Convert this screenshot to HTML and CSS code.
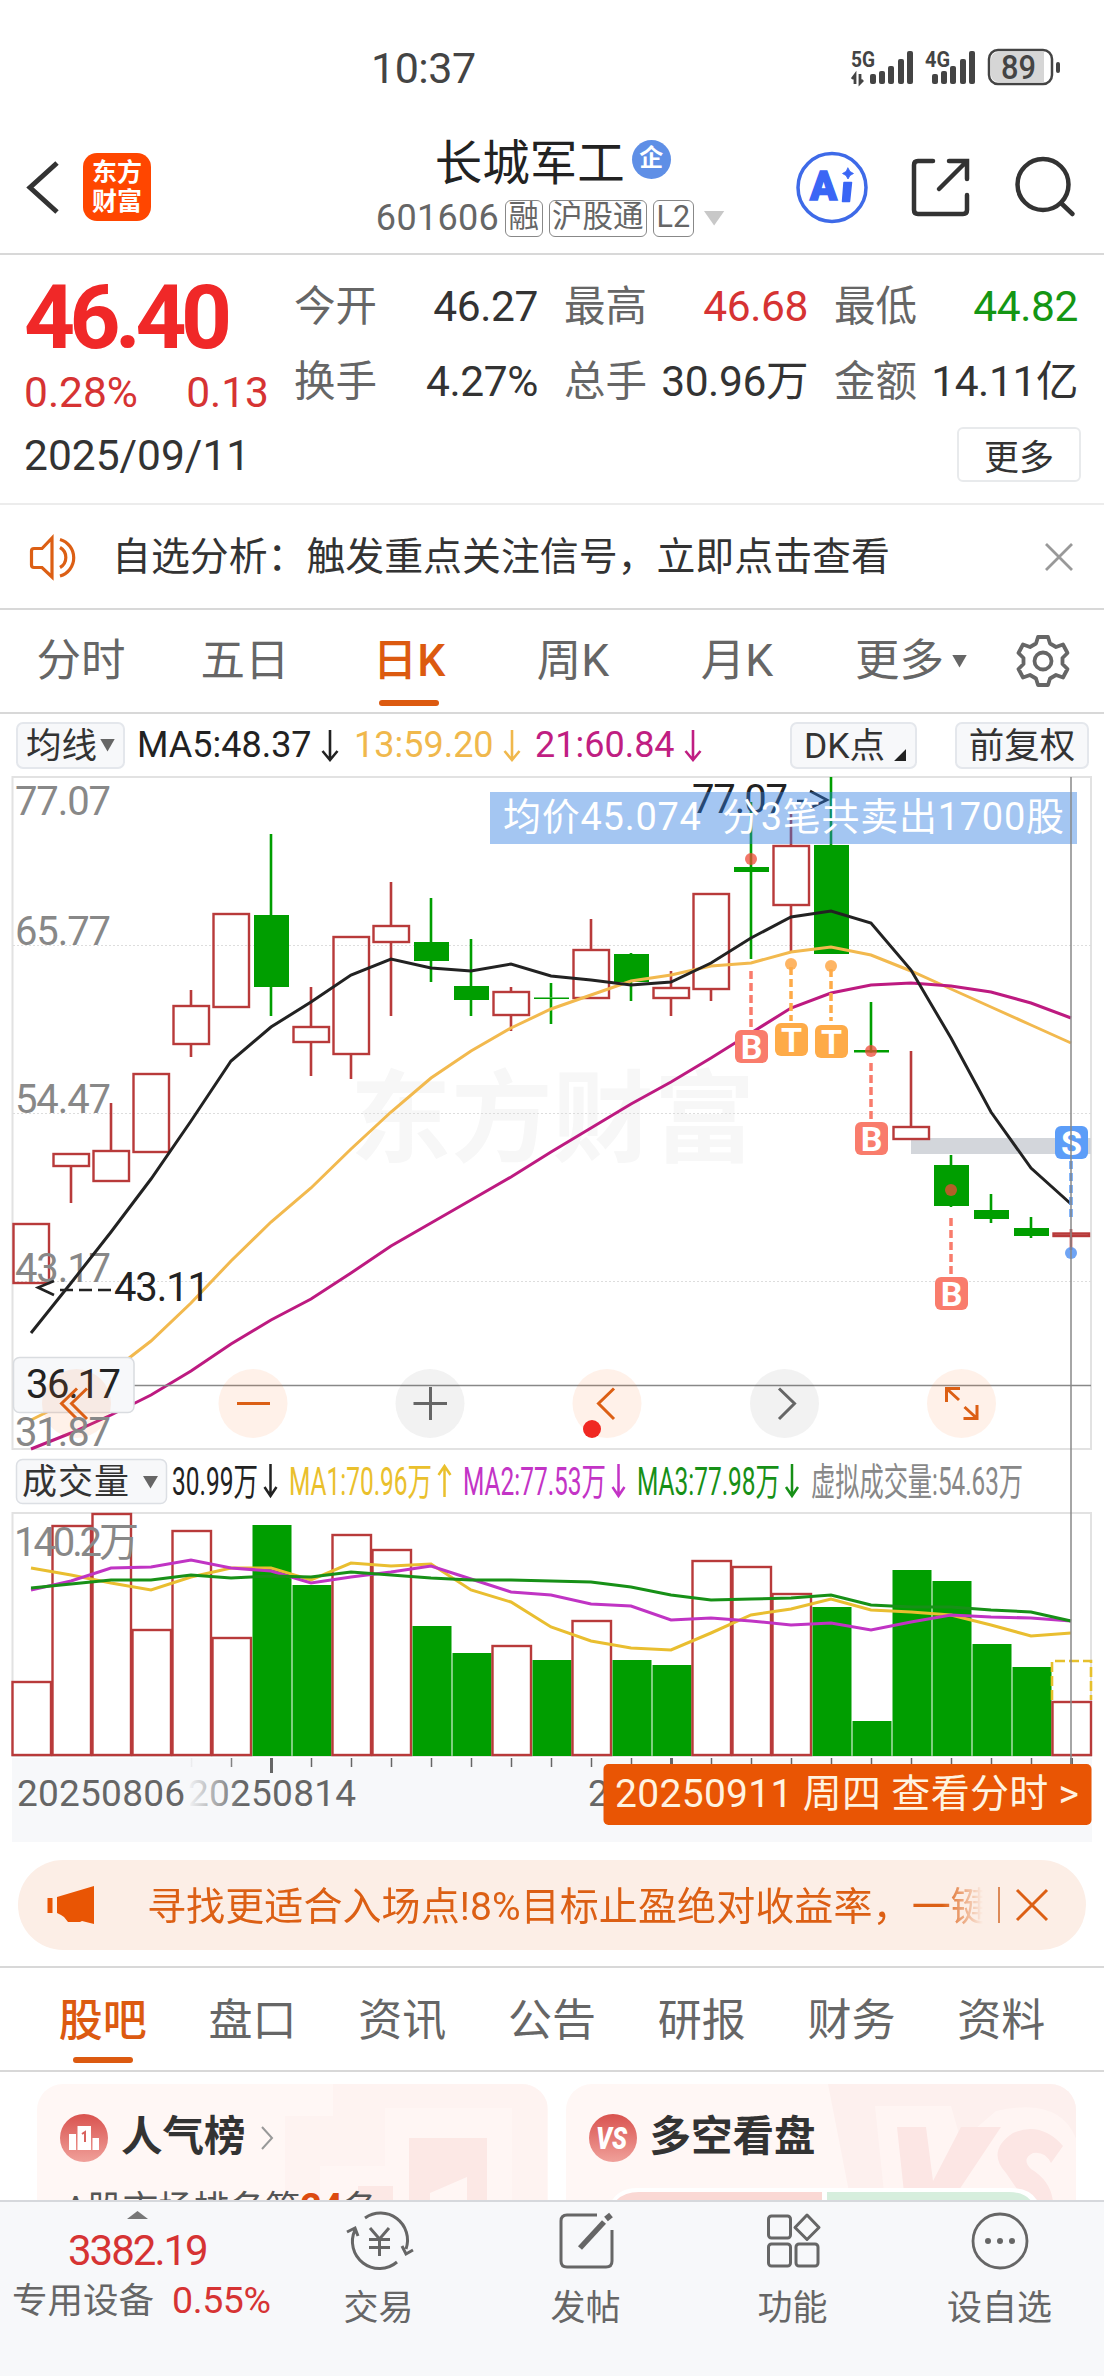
FILE: index.html
```html
<!DOCTYPE html>
<html lang="zh-CN">
<head>
    <meta charset="UTF-8">
    <meta name="viewport" content="width=device-width, initial-scale=1.0">
    <title>长城军工 601606</title>
    <link rel="stylesheet" href="styles.css">
</head>
<body>
    <div class="statusbar">
        <span class="clock">10:37</span>
        <svg class="signals" width="212" height="40" viewBox="850 48 212 40">
            <g fill="#444">
                <text x="851" y="67" font-size="22" font-weight="700" textLength="24" lengthAdjust="spacingAndGlyphs">5G</text>
                <text x="925" y="67" font-size="22" font-weight="700" textLength="25" lengthAdjust="spacingAndGlyphs">4G</text>
                <path d="M855 84V75l-3 4M860 74v9l3-3" stroke="#444" stroke-width="2.8" fill="none"/>
                <rect x="870" y="74" width="6" height="10" rx="2"/><rect x="879" y="71" width="6" height="13" rx="2"/>
                <rect x="888" y="66" width="6" height="18" rx="2"/><rect x="898" y="59" width="6" height="25" rx="2"/>
                <rect x="907" y="51" width="6" height="33" rx="2"/>
                <rect x="932" y="74" width="6" height="10" rx="2"/><rect x="941" y="71" width="6" height="13" rx="2"/>
                <rect x="950" y="66" width="6" height="18" rx="2"/><rect x="960" y="59" width="6" height="25" rx="2"/>
                <rect x="969" y="51" width="6" height="33" rx="2"/>
            </g>
            <rect x="989" y="50" width="63" height="34" rx="9" fill="#fff" stroke="#444" stroke-width="2.5"/>
            <path d="M998 52h46v30h-46a7 7 0 0 1-7-7V59a7 7 0 0 1 7-7z" fill="#d6d6d6"/>
            <rect x="1056" y="62" width="4" height="11" rx="2" fill="#444"/>
            <text x="1001" y="79" font-size="33" font-weight="500" fill="#444" textLength="35" lengthAdjust="spacingAndGlyphs">89</text>
        </svg>
    </div>

    <header class="header">
        <svg class="back" width="36" height="60" viewBox="25 157 36 60"><path d="M57 163L30 187.500L57 212" fill="none" stroke="#333" stroke-width="5"/></svg>
        <div class="logo"><span>东方</span><span>财富</span></div>
        <div class="title">
            <div class="title-name">长城军工<span class="corp">企</span></div>
            <div class="title-code"><span>601606</span><i>融</i><i>沪股通</i><i>L2</i><b class="tri"></b></div>
        </div>
        <svg class="actions" width="290" height="76" viewBox="794 150 290 76" fill="none" stroke="#333" stroke-width="4.500" stroke-linecap="round">
            <circle cx="832" cy="187.500" r="34" stroke="#3e6ae8" stroke-width="3.500"/>
            <text x="810" y="200" font-size="41" font-weight="900" fill="#3a66f5" stroke="#3a66f5" stroke-width="1.500" textLength="27" lengthAdjust="spacingAndGlyphs">A</text>
            <path d="M844 182.500H851.500L849.500 201.500H842.500z" fill="#3a66f5" stroke="#3a66f5" stroke-width="1.500" stroke-linejoin="round"/>
            <path d="M848 168l2 3.500 3.500 2-3.500 2-2 3.500-2-3.500-3.500-2 3.500-2z" fill="#3a66f5" stroke="#3a66f5" stroke-width=".8"/>
            <path d="M933 161h-15q-4 0-4 4v45q0 4 4 4h45q4 0 4-4v-15M949 161h18v18M966 162l-27 27"/>
            <circle cx="1043" cy="184.500" r="25.500"/><path d="M1061 203l11.500 11"/>
        </svg>
    </header>

    <section class="quote">
        <div class="price">
            <div class="price-now">46.40</div>
            <div class="price-change"><span>0.28%</span><span>0.13</span></div>
        </div>
        <div class="stats">
            <div><label>今开</label><span>46.27</span></div>
            <div><label>最高</label><span class="up">46.68</span></div>
            <div><label>最低</label><span class="down">44.82</span></div>
            <div><label>换手</label><span>4.27%</span></div>
            <div><label>总手</label><span>30.96万</span></div>
            <div><label>金额</label><span>14.11亿</span></div>
        </div>
        <div class="date">2025/09/11</div>
        <button class="more">更多</button>
    </section>

    <section class="notice">
        <svg width="54" height="48" viewBox="28 532 54 48" fill="none" stroke="#dc5f14" stroke-width="3.200">
            <path d="M52 537L42 547.500H34q-2.500 0-2.500 2.500v14q0 2.500 2.500 2.500h8L52 576z"/>
            <path d="M60 546.500a11.500 11.500 0 0 1 0 20M60 538.500a19 19 0 0 1 0 36.500"/>
        </svg>
        <p>自选分析：触发重点关注信号，立即点击查看</p>
        <svg width="32" height="32" viewBox="0 0 32 32" stroke="#999" stroke-width="2.800"><path d="M3 3L29 29M29 3L3 29"/></svg>
    </section>

    <nav class="tabs">
        <a>分时</a><a>五日</a><a class="active">日K</a><a>周K</a><a>月K</a><a class="tab-more">更多<b class="tri"></b></a>
        <svg class="gear" width="54" height="54" viewBox="-27 -27 54 54" fill="none" stroke="#666" stroke-width="3.800" stroke-linejoin="round">
            <path d="M-5 -24H5L7 -17.500L13 -14L20 -16.500L24.500 -8L19.500 -3V3L24.500 8L20 16.500L13 14L7 17.500L5 24H-5L-7 17.500L-13 14L-20 16.500L-24.500 8L-19.500 3V-3L-24.500 -8L-20 -16.500L-13 -14L-7 -17.500z"/>
            <circle r="8.500"/>
        </svg>
    </nav>

    <div class="ma-row">
        <button class="chip chip-ma"><span>均线</span><b class="tri"></b></button>
        <span class="ma5">MA5:48.37<svg class="arrow" width="18" height="32" viewBox="0 0 18 32"><path d="M9 0V29M1.500 21L9 30L16.500 21"/></svg></span>
        <span class="ma13">13:59.20<svg class="arrow" width="18" height="32" viewBox="0 0 18 32"><path d="M9 0V29M1.500 21L9 30L16.500 21"/></svg></span>
        <span class="ma21">21:60.84<svg class="arrow" width="18" height="32" viewBox="0 0 18 32"><path d="M9 0V29M1.500 21L9 30L16.500 21"/></svg></span>
        <button class="chip chip-dk"><span>DK点</span><b></b></button>
        <button class="chip chip-fq"><span>前复权</span></button>
    </div>

    <svg class="chart" width="1104" height="1072" viewBox="0 774 1104 1072">
        <text class="watermark" x="350" y="1154" textLength="405" lengthAdjust="spacingAndGlyphs">东方财富</text>
        <!-- price panel -->
        <rect x="12.500" y="777" width="1078.500" height="672" fill="none" stroke="#e2e2e2" stroke-width="2"/>
        <path d="M13 945.500H1091M13 1113.500H1091M13 1281.500H1091" stroke="#ddd" stroke-width="1.200" stroke-dasharray="2 2"/>
        <rect x="911" y="1138" width="180" height="16" fill="#d3d6db"/>
        <g id="candles"></g>
        <g class="axis-label">
            <text x="15" y="815" textLength="96">77.07</text>
            <text x="15" y="945" textLength="96">65.77</text>
            <text x="15" y="1113" textLength="96">54.47</text>
            <text x="15" y="1282" textLength="96">43.17</text>
        </g>
        <g id="ma-lines" fill="none" stroke-width="3"></g>
        <text class="mark" x="692" y="813" textLength="96">77.07</text>
        <path d="M797 801H806M810 791L827 800L810 808" class="mark-arrow"/>
        <text class="mark" x="114" y="1301" textLength="96">43.11</text>
        <path d="M54 1281L38 1287.500L54 1295M60 1290H73M79 1290H92M98 1290H111" class="mark-arrow"/>
        <g id="trades"></g>

        <path d="M13 1385.500H1091" stroke="#888" stroke-width="1.600"/>
        <rect x="13.500" y="1357.500" width="120.500" height="55" rx="6" fill="#f7f8fa" stroke="#d9dce0" stroke-width="1.500"/>
        <text class="mark" x="26" y="1398" textLength="95">36.17</text>
        <g fill="#ff8038" fill-opacity=".11">
            <circle cx="76.500" cy="1403.500" r="34.500"/><circle cx="253" cy="1403.500" r="34.500"/>
            <circle cx="430" cy="1403.500" r="34.500" fill="#444" fill-opacity=".07"/><circle cx="607" cy="1403.500" r="34.500"/>
            <circle cx="784.500" cy="1403.500" r="34.500" fill="#444" fill-opacity=".07"/><circle cx="961.500" cy="1403.500" r="34.500"/>
        </g>
        <g fill="none" stroke="#dc5f14" stroke-width="3">
            <path d="M77 1388.500L61.500 1403.500L77 1419M87 1388.500L71.500 1403.500L87 1419"/>
            <path d="M237 1403.500H270M614 1388.500L598.500 1403.500L614 1419"/>
            <path d="M960 1388.500H946.500V1402M947 1389L959 1400M963.500 1418.500H977V1405M976.500 1418L964.500 1407"/>
            <path d="M413.500 1403.500H447M430.500 1387V1420M779 1388.500L794.500 1403.500L779 1419" stroke="#666"/>
        </g>
        <g class="axis-label"><text x="15" y="1446" textLength="96">31.87</text></g>
        <circle cx="592" cy="1429" r="9" fill="#f02822"/>
        <rect x="490" y="792" width="587" height="52" fill="#2c7be0" fill-opacity=".43"/>
        <text x="503" y="830" class="tip" textLength="561" xml:space="preserve">均价45.074  分3笔共卖出1700股</text>

        <!-- volume panel -->
        <rect x="16.500" y="1459.500" width="150" height="44" rx="6" fill="#f7f8fa" stroke="#dcdfe4" stroke-width="1.500"/>
        <text x="22" y="1494" font-size="35" fill="#333" textLength="107">成交量</text>
        <path d="M143 1476h15l-7.500 12.500z" fill="#666"/>
        <g class="vol-legend">
            <text x="172" y="1495" textLength="86" lengthAdjust="spacingAndGlyphs" fill="#222">30.99万</text>
            <text x="289" y="1495" textLength="143" lengthAdjust="spacingAndGlyphs" fill="#eac02c">MA1:70.96万</text>
            <text x="463" y="1495" textLength="143" lengthAdjust="spacingAndGlyphs" fill="#c334c6">MA2:77.53万</text>
            <text x="637" y="1495" textLength="143" lengthAdjust="spacingAndGlyphs" fill="#179017">MA3:77.98万</text>
            <text x="811" y="1495" textLength="212" lengthAdjust="spacingAndGlyphs" fill="#888">虚拟成交量:54.63万</text>
        </g>
        <g fill="none" stroke-width="2.500">
            <path d="M270.500 1464V1495M264.500 1487L270.500 1496L276.500 1487" stroke="#222"/>
            <path d="M444.500 1497V1466M438.500 1475L444.500 1466L450.500 1475" stroke="#eac02c"/>
            <path d="M618.500 1464V1495M612.500 1487L618.500 1496L624.500 1487" stroke="#c334c6"/>
            <path d="M792 1464V1495M786 1487L792 1496L798 1487" stroke="#179017"/>
        </g>
        <rect x="12.500" y="1513" width="1078.500" height="243" fill="none" stroke="#e2e2e2" stroke-width="2"/>
        <g id="volumes"></g>
        <g class="axis-label"><text x="14" y="1556" textLength="125">140.2万</text></g>
        <g id="vol-lines" fill="none" stroke-width="3"></g>

        <!-- time axis -->
        <rect x="12" y="1758" width="1080" height="84" fill="#f7f8fa"/>
        <g id="ticks"></g>
        <defs>
            <linearGradient id="fade"><stop offset="0" stop-color="#f7f8fa"/><stop offset="1" stop-color="#f7f8fa" stop-opacity="0"/></linearGradient>
        </defs>
        <g class="date-label">
            <text x="17" y="1806" textLength="168">20250806</text>
            <text x="188" y="1806" textLength="168">20250814</text>
            <text x="588" y="1806">2</text>
        </g>
        <rect x="187" y="1758" width="55" height="60" fill="url(#fade)"/>
        <path d="M1071 777V1764" stroke="#888" stroke-width="1.500"/>
        <rect x="603.500" y="1764" width="488" height="61" rx="5" fill="#e95504"/>
        <text x="615" y="1807" class="date-tip" textLength="464">20250911 周四 查看分时 &gt;</text>
    </svg>

    <div class="promo">
        <svg width="50" height="42" viewBox="46 1883 50 42" fill="#e95504">
            <rect x="47.500" y="1897" width="5" height="15"/>
            <path d="M57 1896L94 1885V1923L82 1920L80 1921H68L64 1916L61 1914L57 1912z"/>
        </svg>
        <p>寻找更适合入场点!8%目标止盈绝对收益率，一键</p>
        <i></i>
        <svg width="36" height="36" viewBox="0 0 36 36" stroke="#dc5f14" stroke-width="3"><path d="M3 3L33 33M33 3L3 33"/></svg>
    </div>

    <nav class="subtabs">
        <a class="active">股吧</a><a>盘口</a><a>资讯</a><a>公告</a><a>研报</a><a>财务</a><a>资料</a>
    </nav>

    <section class="cards">
        <div class="card">
            <svg class="card-bg" width="510" height="118" viewBox="37 2083 510 118">
                <path d="M333 2083H547V2201H285V2115H333z" fill="#fdf1ef" opacity=".7"/>
                <path d="M320 2165H385V2107H512V2201H320z" fill="#fff6f4"/>
                <path d="M358 2185H393V2201H358zM409 2137H487V2201H467V2176L430 2192V2201H409z" fill="#fce8e5"/>
            </svg>
            <div class="card-head">
                <svg width="48" height="48" viewBox="0 0 48 48">
                    <defs><linearGradient id="redball" x1="0" y1="0" x2="0" y2="1"><stop offset="0" stop-color="#d9534f"/><stop offset="1" stop-color="#f0a09a"/></linearGradient></defs>
                    <circle cx="24" cy="24" r="24" fill="url(#redball)"/>
                    <path d="M9 20H16V36H9zM17.500 12H31V36H17.500zM32.500 24H39V36H32.500z" fill="#fff"/>
                    <path d="M22 20L25 18V28" fill="none" stroke="#d9635f" stroke-width="2"/>
                </svg>
                <h3>人气榜</h3>
                <svg width="16" height="26" viewBox="0 0 16 26" fill="none" stroke="#999" stroke-width="2"><path d="M2 2L12 13L2 24"/></svg>
            </div>
            <p>A股市场排名第<b>24</b>名</p>
        </div>
        <div class="card">
            <svg class="card-bg" width="511" height="118" viewBox="565 2083 511 118">
                <path d="M827 2083H1076V2201H850z" fill="#fdf0ee"/>
                <path d="M874 2105H950L960 2140L995 2110Q1060 2095 1076 2140V2201H884z" fill="#fff5f3"/>
                <path d="M896 2126H925L932 2180L960 2126H1000L950 2201H904zM1062 2145Q1040 2120 1012 2132Q985 2150 1005 2172L1025 2201H1052Q1050 2180 1030 2168Q1020 2158 1032 2152Q1044 2150 1050 2162z" fill="#fce6e4"/>
                <path d="M610 2201Q618 2187 636 2187H1010Q1030 2187 1037 2201z" fill="#fff"/>
                <path d="M614 2201Q622 2191 638 2191H821V2201z" fill="#fad8d4"/>
                <path d="M826 2191H1008Q1024 2191 1031 2201H826z" fill="#d6eedd"/>
            </svg>
            <div class="card-head">
                <svg width="48" height="48" viewBox="0 0 48 48">
                    <circle cx="24" cy="24" r="24" fill="url(#redball)"/>
                    <text x="7" y="35" font-size="31" font-weight="900" font-style="italic" fill="#fff" textLength="31" lengthAdjust="spacingAndGlyphs">VS</text>
                </svg>
                <h3>多空看盘</h3>
            </div>
        </div>
    </section>

    <footer class="bottombar">
        <div class="index">
            <b class="tri-up"></b>
            <div class="index-value">3382.19</div>
            <div class="index-name">专用设备<span>0.55%</span></div>
        </div>
        <a>
            <svg width="70" height="60" viewBox="343 2210 70 60" fill="none" stroke="#666" stroke-width="3">
                <path d="M364 2217A27 27 0 0 1 405 2248M396 2261A27 27 0 0 1 354 2229M346 2231L354 2227L357 2235M412 2249L405 2253L401 2245"/>
                <path d="M369 2227L378.500 2238L388 2227M378.500 2238V2255M368 2238.500H389M368 2246.500H389"/>
            </svg>
            交易
        </a>
        <a>
            <svg width="60" height="60" viewBox="556 2210 60 60" fill="none" stroke="#666" stroke-width="3">
                <path d="M597 2214H567Q561 2214 561 2220V2260Q561 2266 567 2266H606Q612 2266 612 2260V2229"/>
                <path d="M580 2247L604 2221" stroke-width="5.500"/><path d="M606 2218L611 2214" stroke-width="6"/>
            </svg>
            发帖
        </a>
        <a>
            <svg width="60" height="60" viewBox="763 2210 60 60" fill="none" stroke="#666" stroke-width="3" stroke-linejoin="round">
                <rect x="768.500" y="2215" width="22" height="22" rx="3"/><rect x="768.500" y="2243" width="22" height="22" rx="3"/><rect x="796" y="2243" width="22" height="22" rx="3"/>
                <path d="M807 2214L819 2226.500L807 2238.500L795 2226.500z"/>
            </svg>
            功能
        </a>
        <a>
            <svg width="60" height="60" viewBox="970 2210 60 60">
                <circle cx="1000" cy="2240" r="27" fill="none" stroke="#666" stroke-width="2.800"/>
                <g fill="#666"><circle cx="988" cy="2240" r="3"/><circle cx="1000" cy="2240" r="3"/><circle cx="1012" cy="2240" r="3"/></g>
            </svg>
            设自选
        </a>
    </footer>

    <script src="chart.js"></script>
</body>
</html>
```
FILE: styles.css
```css
* {
    box-sizing: border-box;
}
body {
    margin: 0;
    width: 1104px;
    height: 2376px;
    overflow: hidden;
    background: #fff;
    color: #333;
    font-family: Roboto, "Noto Sans CJK SC", sans-serif;
}
svg {
    display: block;
    flex: none;
}
svg text {
    font-family: Roboto, "Noto Sans CJK SC", sans-serif;
}
p, h3 {
    margin: 0;
}
button {
    font-family: inherit;
    color: #333;
    padding: 0;
}
i {
    font-style: normal;
}
.tri {
    width: 15px;
    height: 13px;
    background: #666;
    clip-path: polygon(0 0, 100% 0, 50% 100%);
}
.up {
    color: #d63333;
}
.down {
    color: #149614;
}

/* status bar */
.statusbar {
    display: flex;
    justify-content: space-between;
    align-items: center;
    height: 136px;
    padding: 0 42px 0 371px;
}
.clock {
    font-size: 43px;
    letter-spacing: -0.5px;
    color: #444;
    line-height: 136px;
}

/* header */
.header {
    display: flex;
    align-items: center;
    height: 119px;
    padding: 0 20px 15px 25px;
    border-bottom: 2px solid #d8d8d8;
}
.logo {
    width: 68px;
    height: 68px;
    margin-left: 22px;
    padding-top: 5px;
    border-radius: 14px;
    background: #ff4600;
    color: #fff;
    font-size: 25px;
    font-weight: 700;
    line-height: 29px;
    text-align: center;
}
.logo span {
    display: block;
}
.title {
    width: 352px;
    margin: 8px 0 0 225px;
}
.title-name {
    display: flex;
    align-items: center;
    height: 54px;
    padding-left: 59px;
    font-size: 47.5px;
    color: #222;
}
.corp {
    width: 39px;
    height: 39px;
    margin: 1px 0 0 7px;
    border-radius: 50%;
    background: #5f8fe6;
    color: #fff;
    font-size: 24px;
    font-weight: 700;
    line-height: 36px;
    text-align: center;
}
.title-code {
    display: flex;
    align-items: center;
    gap: 6px;
    height: 64px;
    color: #666;
    font-size: 36px;
}
.title-code span {
    letter-spacing: 0.3px;
}
.title-code i {
    height: 37px;
    padding: 0 2.5px;
    border: 1.5px solid #888;
    border-radius: 6px;
    font-size: 30.5px;
    line-height: 32px;
}
.title-code .tri {
    width: 21px;
    height: 15px;
    margin-left: 4px;
    background: #c8c8c8;
}
.actions {
    margin: 1px 0 0 67px;
}

/* quote */
.quote {
    display: grid;
    grid-template-columns: 270px 1fr;
    grid-template-rows: 151px 62px;
    height: 250px;
    padding: 18px 23px 0 24px;
    border-bottom: 2px solid #ececec;
}
.price-now {
    height: 88px;
    padding-top: 1px;
    color: #f02828;
    font-size: 89px;
    font-weight: 700;
    letter-spacing: -5.5px;
    line-height: 88px;
}
.price-change {
    display: flex;
    justify-content: space-between;
    height: 63px;
    padding-right: 25px;
    color: #d63333;
    font-size: 42.5px;
    line-height: 63px;
}
.stats {
    display: grid;
    grid-template-columns: repeat(3, 244px);
    grid-template-rows: 75px 75px;
    column-gap: 26px;
    margin-top: -4px;
    font-size: 42.5px;
    line-height: 75px;
}
.stats div {
    display: flex;
    justify-content: space-between;
    white-space: nowrap;
    letter-spacing: -0.4px;
}
.stats label {
    color: #666;
    font-size: 41.5px;
    letter-spacing: 0;
}
.date {
    font-size: 42.5px;
    letter-spacing: 0;
    line-height: 64px;
}
.more {
    justify-self: end;
    width: 124px;
    height: 55px;
    margin-top: 3px;
    padding-bottom: 5px;
    border: 2px solid #e8eaec;
    border-radius: 6px;
    background: #fff;
    font-size: 35px;
}

/* notice */
.notice {
    display: flex;
    align-items: center;
    height: 105px;
    padding: 0 29px 0 28px;
    border-bottom: 2px solid #d8d8d8;
}
.notice p {
    flex: 1;
    margin: 0 0 7px 30px;
    font-size: 38.9px;
}

/* period tabs */
.tabs {
    display: flex;
    align-items: center;
    height: 104px;
    border-bottom: 2px solid #d8d8d8;
    color: #666;
    font-size: 44.5px;
}
.tabs a {
    position: relative;
    left: -1px;
    width: 164px;
    line-height: 103px;
    text-align: center;
}
.tabs .active,
.subtabs .active {
    color: #dc5a10;
    font-weight: 500;
}
.tabs .active::after,
.subtabs .active::after {
    content: "";
    position: absolute;
    left: 50%;
    bottom: 7px;
    width: 60px;
    height: 6px;
    margin-left: -30px;
    border-radius: 3px;
    background: #dc5a10;
}
.tabs .tab-more {
    display: flex;
    align-items: center;
    gap: 8px;
    width: 194px;
    padding-left: 36px;
}
.gear {
    margin-left: 2px;
}

/* moving average row */
.ma-row {
    display: flex;
    align-items: center;
    height: 60px;
    padding: 2px 15px 0 16px;
    font-size: 36px;
}
.chip {
    display: flex;
    align-items: center;
    justify-content: center;
    height: 47px;
    border: 2px solid #e4e7ec;
    border-radius: 7px;
    background: #f7f8fa;
    font-size: 35.5px;
}
.chip span {
    margin-top: -5px;
}
.chip-ma {
    width: 109px;
    gap: 3px;
}
.arrow {
    display: inline-block;
    margin-left: 9px;
    vertical-align: -5px;
    fill: none;
    stroke: currentColor;
    stroke-width: 2.6;
}
.ma5 {
    width: 217px;
    margin-left: 12px;
    color: #222;
    white-space: nowrap;
}
.ma13 {
    width: 181px;
    color: #f0b84c;
    white-space: nowrap;
}
.ma21 {
    width: 255px;
    color: #c01e82;
    white-space: nowrap;
}
.chip-dk {
    width: 127px;
    padding-left: 3px;
}
.chip-dk b {
    width: 12px;
    height: 12px;
    margin: 20px 0 0 9px;
    background: #222;
    clip-path: polygon(100% 0, 100% 100%, 0 100%);
}
.chip-fq {
    width: 134px;
    margin-left: 38px;
}

/* chart */
.watermark {
    font-size: 100px;
    font-weight: 700;
    fill: #f7f7f7;
}
.axis-label text {
    font-size: 40px;
    fill: #888;
}
.mark {
    font-size: 40px;
    fill: #222;
}
.mark-arrow {
    fill: none;
    stroke: #222;
    stroke-width: 2.6;
}
.tip {
    font-size: 38px;
    fill: #fff;
    white-space: pre;
}
.vol-legend text {
    font-size: 38px;
}
.date-label text {
    font-size: 37px;
    fill: #666;
}
.date-tip {
    font-size: 39px;
    fill: #fff3e0;
}
.badge {
    font-size: 34px;
    font-weight: 700;
    fill: #fff;
    text-anchor: middle;
}

/* promo banner */
.promo {
    display: flex;
    align-items: center;
    height: 90px;
    margin: 14px 18px 16px;
    padding: 0 35px 0 28px;
    border-radius: 45px;
    background: #fceee6;
    color: #dc5f14;
}
.promo p {
    width: 837px;
    margin: 0 0 5px 51px;
    overflow: hidden;
    font-size: 39px;
    letter-spacing: 0.1px;
    white-space: nowrap;
    -webkit-mask-image: linear-gradient(90deg, #000 795px, transparent 836px);
    mask-image: linear-gradient(90deg, #000 795px, transparent 836px);
}
.promo i {
    width: 2px;
    height: 36px;
    margin: 0 14px;
    background: #dc8a58;
}

/* content tabs */
.subtabs {
    display: flex;
    height: 106px;
    padding: 0 28px 0 28px;
    border-top: 2px solid #d8d8d8;
    border-bottom: 2px solid #d8d8d8;
    color: #666;
    font-size: 44px;
    line-height: 107px;
}
.subtabs a {
    position: relative;
    flex: 1;
    text-align: center;
}

/* cards */
.cards {
    display: flex;
    gap: 18px;
    height: 128px;
    padding: 12px 28px 0 37px;
    overflow: hidden;
}
.card {
    position: relative;
    width: 511px;
    height: 160px;
    padding: 30px 23px;
    border-radius: 26px;
    background: #fff7f5;
    overflow: hidden;
}
.card-bg {
    position: absolute;
    left: 0;
    top: 0;
}
.card-head {
    position: relative;
    display: flex;
    align-items: center;
    height: 48px;
}
.card h3 {
    margin: 0 14px 2px 13px;
    font-size: 41.5px;
    font-weight: 700;
    line-height: 48px;
}
.card p {
    position: relative;
    margin-top: 23px;
    padding-left: 4px;
    color: #555;
    font-size: 35.5px;
    line-height: 46px;
}
.card p b {
    color: #dc4a10;
    font-size: 38px;
    letter-spacing: -1px;
}

/* bottom bar */
.bottombar {
    display: flex;
    height: 177px;
    border-top: 2px solid #d6d8dc;
    background: #f7f8fa;
    color: #666;
    font-size: 35px;
}
.bottombar a {
    display: flex;
    flex-direction: column;
    align-items: center;
    width: 207px;
    padding-top: 9px;
    line-height: 75px;
}
.index {
    width: 275px;
    padding: 9px 0 0 12px;
}
.tri-up {
    display: block;
    width: 21px;
    height: 8px;
    margin-left: 115px;
    background: #777;
    clip-path: polygon(50% 0, 100% 100%, 0 100%);
}
.index-value {
    margin: 7px 0 0 56px;
    color: #d63333;
    font-size: 42px;
    letter-spacing: -2px;
    line-height: 49px;
}
.index-name {
    font-size: 35.5px;
    line-height: 50px;
    white-space: nowrap;
}
.index-name span {
    margin-left: 18px;
    color: #d63333;
    font-size: 37.5px;
    letter-spacing: -0.4px;
}
```
FILE: chart.js
```js
const RED = '#b83a3a';
const GREEN = '#009e00';
const STEP = 40;
const cx = i => 31 + STEP * i;
const put = (id, html) => document.getElementById(id).innerHTML = html;

// [color, high, top, bottom, low]
const candles = [
    ['r', 1224, 1224, 1283, 1283], ['r', 1154, 1154, 1166, 1203], ['r', 1103, 1151, 1181, 1181],
    ['r', 1074, 1074, 1152, 1152], ['r', 990, 1006, 1044, 1057], ['r', 914, 914, 1007, 1007],
    ['g', 834, 915, 987, 1016], ['r', 987, 1027, 1042, 1076], ['r', 937, 937, 1054, 1079],
    ['r', 882, 926, 942, 1016], ['g', 898, 942, 961, 982], ['g', 939, 986, 1000, 1016],
    ['r', 987, 992, 1015, 1031], ['g', 983, 997.5, 999, 1024], ['r', 919, 950, 998, 998],
    ['g', 953, 954, 982, 1001], ['r', 971, 988, 998, 1016], ['r', 894, 894, 989, 1001],
    ['g', 802, 867, 872, 959], ['r', 812, 846, 905, 952], ['g', 777, 845, 954, 954],
    ['g', 1002, 1050, 1052.5, 1052], ['r', 1051, 1127, 1139, 1139], ['g', 1155, 1165, 1206, 1207],
    ['g', 1194, 1210, 1219, 1223], ['g', 1217, 1228, 1236, 1238], ['r', 1229, 1233.5, 1236, 1250]
];

put('candles', candles.map(([c, high, top, bottom, low], i) => {
    const x = cx(i);
    const color = c === 'r' ? RED : GREEN;
    const body = c === 'r'
        ? `<rect x="${x - 17.5}" y="${top}" width="35.5" height="${bottom - top}" fill="none" stroke="${RED}" stroke-width="2.4"/>`
        : `<rect x="${x - 17}" y="${top}" width="35" height="${bottom - top}" fill="${GREEN}"/>`;
    return `<path d="M${x} ${high}V${top}M${x} ${bottom}V${low}" stroke="${color}" stroke-width="2.6"/>${body}`;
}).join(''));

const line = (ys, color) =>
    `<polyline points="${ys.map((y, i) => cx(i) + ',' + y).join(' ')}" stroke="${color}"/>`;

put('ma-lines',
    line([1420, 1400, 1372, 1341, 1303, 1261, 1222, 1188, 1149, 1112, 1078, 1051, 1028, 1009, 995, 981, 975, 966, 963, 952, 947, 955, 971, 989, 1007, 1025, 1043], '#f2b94e') +
    line([1449, 1433, 1415, 1395, 1371, 1344, 1320, 1299, 1273, 1246, 1223, 1200, 1177, 1152, 1128, 1104, 1082, 1058, 1033, 1008, 993, 985, 983, 986, 992, 1003, 1018], '#bd1a80') +
    line([1333, 1283, 1232, 1179, 1121, 1061, 1027, 1002, 975, 959, 968, 971, 964, 976, 980, 985, 982, 963, 938, 917, 911, 923, 970, 1038, 1112, 1168, 1204], '#222')
);

// [index, dot y, dash from, dash to, badge y, letter, color]
const trades = [
    [18, 859, 971, 1029, 1030, 'B', '#f97c6c'], [19, 964, 967, 1021, 1023, 'T', '#feab48'],
    [20, 966, 969, 1021, 1025, 'T', '#feab48'], [21, 1051, 1063, 1120, 1122, 'B', '#f97c6c'],
    [23, 1190, 1218, 1276, 1277, 'B', '#f97c6c'], [26, 1253, 1161, 1218, 1126, 'S', '#5c9df8']
];
const dots = { B: '#ee4a36', T: '#fd9c30', S: '#3f86f0' };

put('trades', trades.map(([i, dot, from, to, y, letter, color]) => {
    const x = cx(i);
    return `<circle cx="${x}" cy="${dot}" r="6" fill="${dots[letter]}" fill-opacity=".75"/>
        <path d="M${x} ${from}V${to}" stroke="${color}" stroke-width="3.5" stroke-dasharray="8 4"/>
        <rect x="${x - 16}" y="${y}" width="33" height="33" rx="6" fill="${color}"/>
        <text class="badge" x="${x + 0.5}" y="${y + 28.5}">${letter}</text>`;
}).join(''));

const volumes = [
    ['r', 1682], ['r', 1526], ['r', 1514], ['r', 1630], ['r', 1531], ['r', 1638], ['g', 1525],
    ['g', 1585], ['r', 1535], ['r', 1550], ['g', 1626], ['g', 1653], ['r', 1646], ['g', 1660],
    ['r', 1621], ['g', 1660], ['g', 1665], ['r', 1561], ['r', 1567], ['r', 1594], ['g', 1607],
    ['g', 1721], ['g', 1570], ['g', 1581], ['g', 1644], ['g', 1667], ['r', 1702]
];

put('volumes', volumes.map(([c, y], i) => {
    const x = cx(i) - 18.5;
    return c === 'r'
        ? `<rect x="${x}" y="${y}" width="38.5" height="${1755 - y}" fill="#fff" stroke="${RED}" stroke-width="2.4"/>`
        : `<rect x="${x}" y="${y}" width="39" height="${1756 - y}" fill="${GREEN}"/>`;
}).join('') + '<path d="M1052 1700V1661H1091V1700" fill="none" stroke="#e6c02c" stroke-width="2.6" stroke-dasharray="10 4"/>');

put('vol-lines',
    line([1568, 1575, 1583, 1590, 1577, 1568, 1568, 1580, 1563, 1566, 1564, 1590, 1602, 1627, 1641, 1648, 1650, 1633, 1615, 1609, 1599, 1610, 1612, 1615, 1625, 1636, 1633], '#e9be30') +
    line([1590, 1581, 1568, 1567, 1560, 1568, 1571, 1583, 1577, 1572, 1566, 1579, 1592, 1595, 1604, 1606, 1620, 1618, 1621, 1625, 1623, 1630, 1622, 1615, 1617, 1618, 1621], '#c034c4') +
    line([1588, 1584, 1580, 1580, 1575, 1578, 1576, 1577, 1572, 1575, 1578, 1580, 1580, 1581, 1582, 1587, 1595, 1600, 1599, 1598, 1595, 1605, 1607, 1607, 1610, 1612, 1621], '#179017')
);

let ticks = '';
for (let i = 4; i <= 26; i++) {
    const major = i === 6 || i === 16 || i === 26;
    ticks += `<path d="M${cx(i) + 0.5} 1758V${major ? 1773 : 1767}" stroke="#666" stroke-width="${major ? 3 : 1.5}"/>`;
}
put('ticks', ticks);
```
